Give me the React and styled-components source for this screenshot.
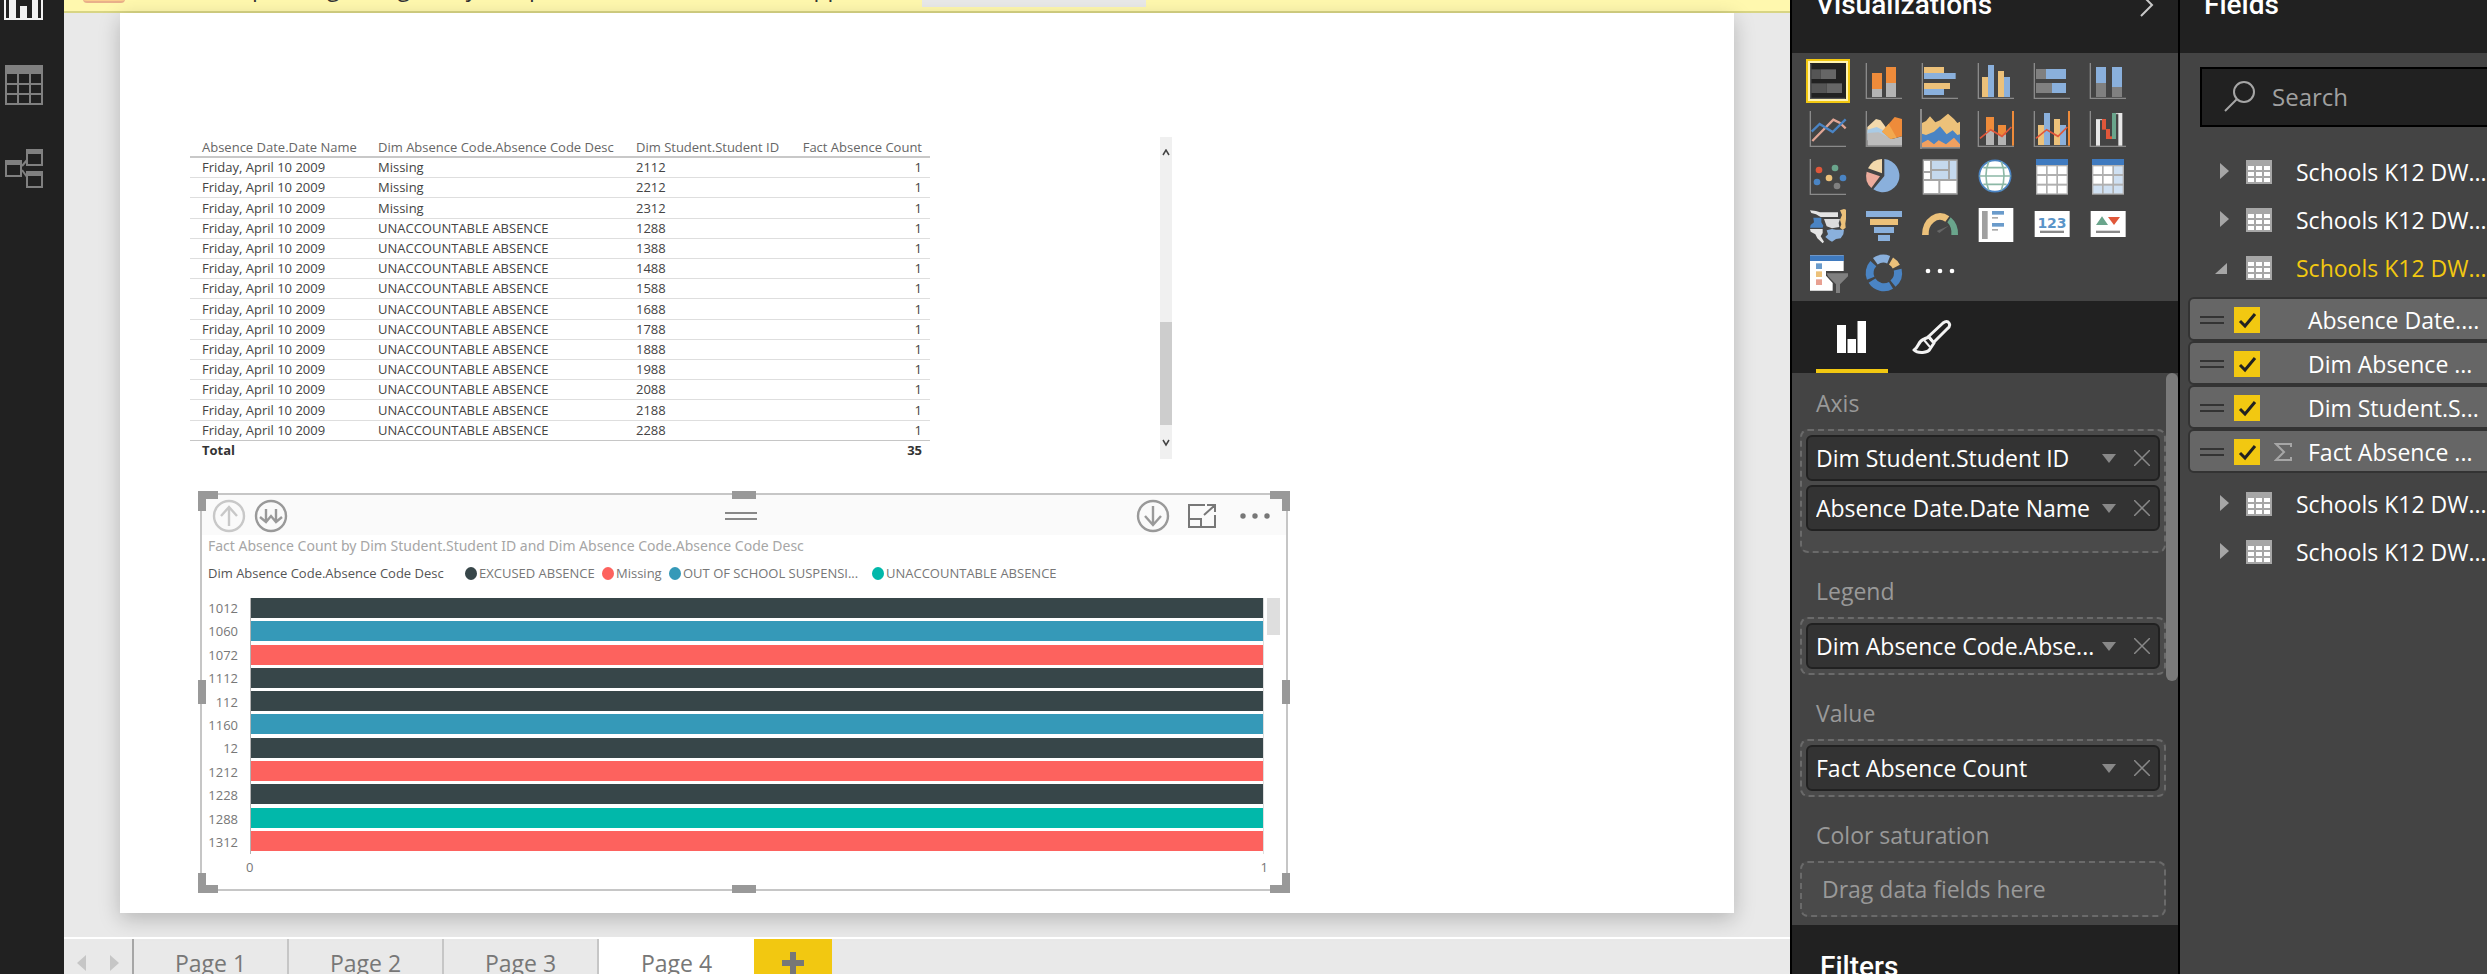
import React from "react";
import styled, { createGlobalStyle, css } from "styled-components";

const GlobalStyle = createGlobalStyle`
  * { box-sizing: border-box; }
  html, body { margin: 0; height: 100%; overflow: hidden; }
  body { font-family: "Open Sans", "Noto Sans", sans-serif; background: #e9e9e9; }
  button { font: inherit; color: inherit; background: none; border: 0; padding: 0; }
  h2, h3, p { margin: 0; font-weight: 400; }
  svg { display: block; }
`;

const colors = {
  ink: "#212121",
  panel: "#444444",
  gold: "#f2c811",
  slate: "#374649",
  red: "#fd625e",
  blue: "#3599b8",
  teal: "#01b8aa",
};

/* ---------- Shell ---------- */

const Shell = styled.div`
  display: flex;
  height: 100vh;
  overflow: hidden;
`;

const Rail = styled.nav`
  flex: 0 0 64px;
  background: ${colors.ink};
`;

const RailList = styled.div`
  display: flex;
  flex-direction: column;
  margin-top: -41px;
`;

const RailButton = styled.button`
  height: 84px;
  padding-left: 4px;
`;

const Workspace = styled.main`
  flex: 1;
  min-width: 0;
  display: flex;
  flex-direction: column;
  background: #e9e9e9;
`;

const Banner = styled.div`
  flex: 0 0 50px;
  margin-top: -37px;
  padding: 0 19px;
  display: flex;
  align-items: center;
  background: #fff8ae;
  border-bottom: 2px solid #d8d584;
  color: #333;
  font-size: 23px;
  line-height: 30px;
  white-space: nowrap;
`;

const BannerIcon = styled.span`
  width: 42px;
  height: 32px;
  margin-right: 18px;
  border-radius: 4px;
  background: #fbcd8c;
  border-bottom: 2px solid #e9b08a;
`;

const BannerButton = styled.button`
  width: 224px;
  height: 40px;
  margin-left: 36px;
  background: #e9e9e9;
`;

const Desk = styled.div`
  flex: 1;
  min-height: 0;
  padding: 0 56px 24px;
`;

const Paper = styled.section`
  height: 100%;
  padding: 124px 0 0 70px;
  background: #fff;
  box-shadow: 0 6px 20px rgba(0, 0, 0, 0.22);
`;

/* ---------- Table visual ---------- */

const TableVisual = styled.section`
  display: flex;
  justify-content: space-between;
  width: 982px;
  height: 322px;
`;

const DataTable = styled.table`
  width: 740px;
  align-self: flex-start;
  table-layout: fixed;
  border-collapse: collapse;
  font-size: 13px;
  line-height: 18px;
  color: #444;
  white-space: nowrap;

  th, td { padding: 0 0 0 12px; text-align: left; }
  th:last-child, td:last-child { padding: 0 8px 0 0; text-align: right; }
  thead th { font-weight: 500; color: #666; border-bottom: 2px solid #c8c8c8; }
  tbody td { border-bottom: 1px solid #dedede; }
  tbody tr:last-child td { border-bottom: 1px solid #c6c6c6; }
  tfoot td, tfoot th { font-weight: 700; color: #333; }
`;

const Col = styled.col`
  width: ${(p) => p.$w}px;
`;

const Row = styled.tr`
  height: 20px;
  &:nth-child(5n + 3) { height: 21px; }
`;

const VScroll = styled.div`
  display: flex;
  flex-direction: column;
  align-items: center;
  width: 12px;
  padding: 12px 0 12px;
  background: #f0f0f0;
`;

const VThumb = styled.div`
  width: 12px;
  height: 103px;
  margin: auto 0 14px;
  background: #cdcdcd;
`;

/* ---------- Chart visual ---------- */

const ChartVisual = styled.section`
  position: relative;
  width: 1088px;
  height: 398px;
  margin: 34px 0 0 10px;
  border: 2px solid #c6c6c6;
  background: #fff;
`;

const Handle = styled.span`
  position: absolute;
  ${(p) => p.$v === "mid" && css`top: 50%; margin-top: -12px;`}
  ${(p) => p.$v === "top" && css`top: -4px;`}
  ${(p) => p.$v === "bottom" && css`bottom: -4px;`}
  ${(p) => p.$h === "mid" && css`left: 50%; margin-left: -12px;`}
  ${(p) => p.$h === "left" && css`left: -4px;`}
  ${(p) => p.$h === "right" && css`right: -4px;`}
  width: ${(p) => (p.$v === "mid" ? 8 : p.$h === "mid" ? 24 : 20)}px;
  height: ${(p) => (p.$h === "mid" ? 8 : p.$v === "mid" ? 24 : 20)}px;
  ${(p) =>
    p.$v === "mid" || p.$h === "mid"
      ? css`background: #999;`
      : css`
          border: 0 solid #999;
          border-${p.$v}-width: 8px;
          border-${p.$h}-width: 8px;
        `}
`;

const ChartBar = styled.header`
  display: grid;
  grid-template-columns: 1fr auto 1fr;
  align-items: center;
  height: 40px;
  padding: 2px 16px 0 10px;
  background: #fafafa;
  color: #888;
`;

const ToolGroup = styled.div`
  display: flex;
  align-items: center;
  gap: ${(p) => p.$gap}px;
  justify-content: ${(p) => (p.$end ? "flex-end" : "flex-start")};
`;

const ToolButton = styled.button`
  color: ${(p) => (p.$dim ? "#c8c8c8" : "#999")};
`;

const ChartTitle = styled.h3`
  padding-left: 6px;
  font-family: "Noto Sans", sans-serif;
  font-size: 14px;
  line-height: 22px;
  color: #a6a6a6;
`;

const Legend = styled.div`
  display: flex;
  align-items: center;
  height: 32px;
  padding-left: 6px;
  font-size: 13px;
  line-height: 18px;
  color: #777;
`;

const LegendTitle = styled.span`
  width: 257px;
  font-weight: 500;
  color: #555;
`;

const LegendItem = styled.span`
  display: flex;
  align-items: center;
  gap: 2px;
  width: ${(p) => p.$w}px;
  white-space: nowrap;
`;

const Dot = styled.i`
  width: 12px;
  height: 13px;
  border-radius: 50%;
  background: ${(p) => p.$c};
`;

const Plot = styled.div`
  display: flex;
  margin-top: 9px;
  font-size: 13px;
  line-height: 20px;
  color: #777;
`;

const PlotLabels = styled.ol`
  list-style: none;
  margin: 0;
  padding: 0 12px 0 0;
  width: 48px;
  height: 254px;
  display: flex;
  flex-direction: column;
  justify-content: space-between;
  text-align: right;
`;

const PlotArea = styled.div`
  flex: 1;
`;

const Bars = styled.div`
  display: flex;
  flex-direction: column;
  justify-content: space-between;
  height: 256px;
  padding-bottom: 3px;
  border-left: 1px solid #b3b3b3;
  border-right: 1px solid #dedede;
`;

const Bar = styled.div`
  height: 20px;
  background: ${(p) => p.$c};
`;

const Ticks = styled.div`
  display: flex;
  justify-content: space-between;
  margin: 3px -4px 0;
`;

const PlotThumb = styled.div`
  width: 13px;
  height: 37px;
  margin: 0 6px 0 3px;
  background: #dedede;
`;

/* ---------- Page tabs ---------- */

const PageTabs = styled.nav`
  flex: 0 0 50px;
  margin-bottom: -13px;
  display: flex;
  border-top: 2px solid #fff;
  font-size: 23px;
  line-height: 30px;
  color: #777;
`;

const TabNav = styled.div`
  display: flex;
  align-items: center;
  justify-content: center;
  gap: 24px;
  width: 70px;
  border-right: 2px solid #a6a6a6;
`;

const PageTab = styled.button`
  width: 155px;
  border-right: ${(p) => (p.$active ? 0 : 2)}px solid #c6c6c6;
  background: ${(p) => (p.$active ? "#fff" : "transparent")};
  font-weight: 500;
`;

const AddTab = styled.button`
  display: grid;
  place-items: center;
  width: 78px;
  background: ${colors.gold};
`;

/* ---------- Side panels ---------- */

const Panel = styled.aside`
  flex: 0 0 ${(p) => p.$w}px;
  min-width: 0;
  overflow: hidden;
  display: flex;
  flex-direction: column;
  border-left: 2px solid #000;
  background: ${colors.panel};
  color: #fff;
  font-size: 23px;
  line-height: 36px;
  white-space: nowrap;
`;

const PanelHeader = styled.header`
  flex: none;
  display: flex;
  align-items: center;
  justify-content: space-between;
  height: 96px;
  margin-top: -43px;
  padding: 0 24px;
  background: ${colors.ink};
`;

const PanelTitle = styled.h2`
  font-family: Roboto, "Open Sans", sans-serif;
  font-size: 28px;
  font-weight: 500;
  line-height: 36px;
`;

const IconGrid = styled.div`
  display: grid;
  flex: none;
  grid-template-columns: repeat(6, 44px);
  gap: 4px 12px;
  padding: 6px 14px;
`;

const VizButton = styled.button`
  width: 44px;
  height: 44px;
  ${(p) =>
    p.$active &&
    css`
      background: ${colors.ink};
      box-shadow: inset 0 0 0 2px ${colors.gold}, inset 0 0 0 4px #fff3b0;
    `}
`;

const PaneTabs = styled.div`
  display: flex;
  flex: none;
  gap: 8px;
  height: 72px;
  padding-left: 24px;
  background: ${colors.ink};
`;

const PaneTab = styled.button`
  display: grid;
  place-items: center;
  width: 72px;
  padding-top: 4px;
  border-bottom: 4px solid ${(p) => (p.$active ? colors.gold : "transparent")};
`;

const WellArea = styled.div`
  display: flex;
  flex: none;
  justify-content: space-between;
`;

const Wells = styled.div`
  flex: 1;
  min-width: 0;
  display: flex;
  flex-direction: column;
  gap: 20px;
  padding: 12px 0 8px 8px;
`;

const WellLabel = styled.h3`
  padding-left: 16px;
  margin-bottom: 8px;
  font-size: 23px;
  color: #999;
`;

const Well = styled.div`
  display: flex;
  flex-direction: column;
  gap: 4px;
  padding: 4px 4px ${(p) => (p.$open ? 20 : 4)}px;
  border: 2px dashed #6a6a6a;
  border-radius: 8px;
  background: #4a4a4a;
`;

const Pill = styled.div`
  display: flex;
  align-items: center;
  height: 46px;
  padding: 0 8px;
  border: 2px solid ${colors.ink};
  border-radius: 6px;
  background: #333;
`;

const PillName = styled.span`
  flex: 1;
  overflow: hidden;
`;

const PillButton = styled.button`
  margin-left: ${(p) => p.$gap || 0}px;
  color: #888;
`;

const Placeholder = styled.p`
  height: 44px;
  padding-left: 16px;
  line-height: 44px;
  color: #999;
`;

const WellThumb = styled.div`
  width: 12px;
  height: 308px;
  border-radius: 6px;
  background: #7a7a7a;
`;

const FiltersHeader = styled.header`
  flex: 1 0 72px;
  padding: 24px 0 0 28px;
  background: ${colors.ink};
`;

const SearchBox = styled.label`
  display: flex;
  align-items: center;
  flex: none;
  width: 340px;
  height: 60px;
  margin: 14px 0 21px 20px;
  padding-left: 22px;
  border: 2px solid #000;
  background: ${colors.ink};
`;

const SearchInput = styled.input`
  width: 240px;
  margin-left: 16px;
  padding: 0;
  border: 0;
  outline: 0;
  background: transparent;
  font: inherit;
  font-size: 24px;
  color: #fff;
  &::placeholder { color: #a0a0a0; opacity: 1; }
`;

const TableNode = styled.button`
  display: grid;
  flex: none;
  grid-template-columns: 14px 26px auto;
  align-items: center;
  justify-content: start;
  height: 48px;
  padding-left: 35px;
  color: ${(p) => (p.$active ? colors.gold : "#fff")};

  svg:nth-child(2) { margin-left: 17px; }
  span { margin-left: 41px; }
`;

const FieldList = styled.div`
  display: flex;
  flex: none;
  flex-direction: column;
  margin: 5px 0 7px 8px;
`;

const FieldRow = styled.label`
  display: flex;
  align-items: center;
  width: 360px;
  height: 44px;
  padding: 2px 0 0 10px;
  border: 2px solid #333;
  border-radius: 6px;
  background: #666;
`;

const Grip = styled.span`
  width: ${(p) => p.$w}px;
  height: 8px;
  border: solid ${(p) => p.$c};
  border-width: 2px 0;
`;

const CheckWrap = styled.span`
  display: grid;
  width: 26px;
  height: 26px;
  margin-left: 10px;
  > * { grid-area: 1 / 1; }
  svg { pointer-events: none; }
`;

const CheckInput = styled.input`
  appearance: none;
  width: 26px;
  height: 26px;
  margin: 0;
  background: ${colors.gold};
`;

const SigmaSlot = styled.span`
  width: 48px;
  padding-left: 14px;
`;

/* ---------- Icons ---------- */

const Y = "#ecc17a";
const B = "#8ab0dc";
const DB = "#4a84c4";
const O = "#ee8b3a";
const G = "#b4b4b4";
const DG = "#808080";
const GR = "#6aa58c";
const R = "#e0573a";

const R4 = ({ r, f }) => <rect x={r[0]} y={r[1]} width={r[2]} height={r[3]} fill={f} />;
const Axes = () => <path d="M13 12V118H120" fill="none" stroke="#8a8a8a" strokeWidth="4" />;

const GridGlyph = ({ last }) => (
  <>
    <R4 r={[18, 12, 96, 107]} f="#b0b0b0" />
    <R4 r={[18, 12, 96, 18]} f="#3f7abf" />
    {[0, 1, 2].map((i) =>
      [0, 1, 2].map((j) => (
        <R4 key={`${i}${j}`} r={[22 + i * 31, 34 + j * 29, 26, 23]} f={last && (i === 2 || j === 2) ? "#cfe0f2" : "#fff"} />
      ))
    )}
  </>
);

const vizIcons = [
  ["Stacked bar chart", <><path d="M14 14V118H118" fill="none" stroke="#555" strokeWidth="4" /><R4 r={[16, 31, 28, 29]} f="#555" /><R4 r={[44, 31, 46, 29]} f="#666" /><R4 r={[16, 73, 46, 29]} f="#555" /><R4 r={[62, 73, 46, 29]} f="#666" /></>],
  ["Stacked column chart", <><Axes /><R4 r={[30, 42, 30, 48]} f={O} /><R4 r={[30, 90, 30, 24]} f={G} /><R4 r={[72, 24, 30, 48]} f={O} /><R4 r={[72, 72, 30, 42]} f={G} /></>],
  ["Clustered bar chart", <><Axes /><R4 r={[18, 24, 60, 18]} f={Y} /><R4 r={[18, 42, 95, 18]} f={B} /><R4 r={[18, 72, 78, 18]} f={Y} /><R4 r={[18, 90, 60, 18]} f={B} /></>],
  ["Clustered column chart", <><Axes /><R4 r={[24, 54, 18, 60]} f={Y} /><R4 r={[42, 18, 18, 96]} f={B} /><R4 r={[72, 36, 18, 78]} f={Y} /><R4 r={[90, 54, 18, 60]} f={B} /></>],
  ["100% stacked bar chart", <><Axes /><R4 r={[18, 30, 30, 30]} f={DG} /><R4 r={[48, 30, 60, 30]} f={B} /><R4 r={[18, 72, 48, 30]} f={DG} /><R4 r={[66, 72, 42, 30]} f={B} /></>],
  ["100% stacked column chart", <><Axes /><R4 r={[30, 24, 30, 48]} f={B} /><R4 r={[30, 72, 30, 42]} f={DG} /><R4 r={[78, 24, 30, 60]} f={B} /><R4 r={[78, 84, 30, 30]} f={DG} /></>],

  ["Line chart", <><Axes /><path d="M19 102L82 38 102 48 119 64" fill="none" stroke="#e0a595" strokeWidth="7" /><path d="M17 74L41 51 80 75 119 37" fill="none" stroke={DB} strokeWidth="7" /></>],
  ["Area chart", <><path d="M16 60L42 36 56 40 78 70 60 84 16 80Z" fill="#f3d9ac" /><path d="M16 68L44 60 80 78 80 100H16Z" fill="#a9cbe6" /><path d="M16 78L50 76 90 96 120 88V116H16Z" fill="#bcbcbc" /><path d="M60 74L98 30 120 36V88L86 96Z" fill={O} /><path d="M60 74L80 50 104 92 86 96Z" fill="#f2a950" /><Axes /></>],
  ["Ribbon chart", <><R4 r={[6, 6, 6, 120]} f="#8a8a8a" /><path d="M12 48L24 42 36 28 52 46 66 40 90 20 108 36 118 48 126 44V120H12Z" fill={Y} /><path d="M12 80L24 84 48 74 66 58 86 82 104 70 118 84 126 82V120H12Z" fill={DB} /><path d="M12 120V108L30 98 48 112 62 100 84 112 108 92 126 112V120Z" fill="#f0a060" /><R4 r={[6, 120, 120, 5]} f="#8a8a8a" /></>],
  ["Line and stacked column chart", <><Axes /><R4 r={[36, 30, 24, 42]} f={O} /><R4 r={[36, 72, 24, 42]} f={G} /><R4 r={[72, 54, 24, 30]} f={O} /><R4 r={[72, 84, 24, 30]} f={G} /><path d="M18 94L50 68 84 88 112 60" fill="none" stroke={R} strokeWidth="5" /><R4 r={[114, 12, 6, 104]} f={O} /></>],
  ["Line and clustered column chart", <><Axes /><R4 r={[24, 54, 18, 60]} f={Y} /><R4 r={[42, 18, 18, 96]} f={B} /><R4 r={[72, 36, 18, 78]} f={Y} /><R4 r={[90, 54, 18, 60]} f={B} /><path d="M18 94L50 68 84 88 112 60" fill="none" stroke={R} strokeWidth="5" /><R4 r={[114, 12, 6, 104]} f={O} /></>],
  ["Waterfall chart", <><Axes /><path d="M30 38H54M90 20H108" stroke="#ddd" strokeWidth="3" /><R4 r={[30, 38, 12, 78]} f="#e8e8e8" /><R4 r={[48, 36, 12, 32]} f={R} /><R4 r={[60, 66, 12, 30]} f={R} /><R4 r={[66, 88, 16, 8]} f={R} /><R4 r={[78, 18, 12, 78]} f={GR} /><R4 r={[97, 18, 12, 98]} f="#e8e8e8" /></>],

  ["Scatter chart", <><Axes /><circle cx="39" cy="45" r="10" fill={R} /><circle cx="87" cy="39" r="10" fill={GR} /><circle cx="69" cy="69" r="10" fill={Y} /><circle cx="111" cy="69" r="10" fill={DB} /><circle cx="33" cy="81" r="10" fill={DB} /><circle cx="93" cy="93" r="10" fill={DG} /></>],
  ["Pie chart", <><path d="M67 12A50 50 0 1 1 34 103L67 63Z" fill={B} /><path d="M60 12V55L18 40A48 48 0 0 1 60 12Z" fill="#f3d9ac" /><path d="M14 50L54 64 28 99A50 50 0 0 1 14 50Z" fill="#ecab9c" /></>],
  ["Treemap", <><R4 r={[14, 13, 105, 106]} f="#a6a6a6" /><R4 r={[18, 18, 18, 30]} f="#fff" /><R4 r={[18, 54, 18, 18]} f="#fff" /><R4 r={[42, 18, 48, 24]} f="#c5d9ee" /><R4 r={[42, 48, 48, 24]} f="#c5d9ee" /><R4 r={[96, 18, 19, 54]} f="#c5d9ee" /><R4 r={[18, 78, 43, 36]} f="#fff" /><R4 r={[67, 78, 48, 36]} f="#fff" /></>],
  ["Map", <><circle cx="63" cy="63" r="47" fill="#fff" stroke={DB} strokeWidth="5" /><path d="M16 63H110M28 38H98M28 88H98M44 20C32 50 34 78 44 106M82 20C94 50 92 78 82 106" fill="none" stroke="#8cb8a6" strokeWidth="5" /></>],
  ["Table", <GridGlyph />],
  ["Matrix", <GridGlyph last />],

  ["Filled map", <><path d="M12 22L30 24 42 28H96V42H44L30 34 16 30Z" fill="#e4e4e4" /><path d="M102 22L114 18 120 20V48L118 62 119 74 110 81 102 74 106 64 102 50 108 36Z" fill={Y} /><path d="M22 44H46V58L52 68 50 74H12L14 66 24 58Z" fill={DB} /><path d="M54 48H102L98 60 100 72 78 76 62 70Z" fill="#dcdcdc" /><path d="M12 78H50V90L44 100 54 116 50 121 34 106 28 94 14 86Z" fill="#e4e4e4" /><path d="M62 82L78 78 90 80 114 80 112 94 104 106 90 108 78 116 70 112 58 102 66 94Z" fill={B} /></>],
  ["Funnel", <><R4 r={[12, 24, 108, 18]} f={B} /><R4 r={[24, 48, 84, 18]} f={Y} /><R4 r={[36, 72, 60, 18]} f={B} /><R4 r={[48, 96, 36, 18]} f={B} /></>],
  ["Gauge", <><path d="M12 96A54 66 0 0 1 94 40L82 56A34 42 0 0 0 32 96Z" fill={Y} /><path d="M98 43A54 62 0 0 1 120 96H100A34 42 0 0 0 88 58Z" fill={GR} /><path d="M56 84L92 68 64 90Z" fill="#666" /></>],
  ["Multi-row card", <><R4 r={[14, 15, 104, 102]} f="#fff" /><R4 r={[24, 24, 17, 84]} f="#a0a0a0" /><R4 r={[54, 24, 36, 11]} f="#6a9bcb" /><R4 r={[54, 42, 18, 5]} f="#aaa" /><R4 r={[54, 60, 36, 11]} f="#6a9bcb" /><R4 r={[54, 78, 18, 5]} f="#aaa" /></>],
  ["Card", <><R4 r={[14, 24, 105, 78]} f="#fff" /><text x="66" y="74" textAnchor="middle" fontFamily="DejaVu Sans, sans-serif" fontWeight="700" fontSize="42" fill="#5a94c8">123</text><R4 r={[30, 83, 72, 7]} f="#888" /></>],
  ["KPI", <><R4 r={[14, 24, 105, 78]} f="#fff" /><path d="M30 66L48 40 66 66Z" fill={GR} /><path d="M66 42H102L84 66Z" fill={R} /><R4 r={[30, 83, 72, 7]} f="#888" /></>],

  ["Slicer", <><path d="M12 13H113V60H60V74L80 96V119H12Z" fill="#fff" /><R4 r={[12, 13, 102, 17]} f="#3f7abf" /><R4 r={[30, 37, 18, 17]} f="#6a9bcb" /><R4 r={[30, 61, 18, 17]} f={Y} /><R4 r={[30, 85, 18, 17]} f="#e8a091" /><path d="M62 67H126V76L102 100V126H90V100L66 76Z" fill={DG} /></>],
  ["Donut chart", <><g fill="none" strokeWidth="24"><path d="M40 31A42 42 0 0 1 80 26" stroke={B} /><path d="M87 30A42 42 0 0 1 103 47" stroke={Y} /><path d="M107 56A42 42 0 0 1 93 98" stroke={DB} /><path d="M87 103A42 42 0 0 1 30 89" stroke={DB} /><path d="M26 82A42 42 0 0 1 34 38" stroke={DB} /></g></>],
  ["More visuals", <g fill="#fff"><circle cx="30" cy="60" r="7" /><circle cx="66" cy="60" r="7" /><circle cx="102" cy="60" r="7" /></g>],
];

const ReportIcon = () => (
  <svg width="40" height="40" viewBox="0 0 40 40">
    <path d="M1 0V38H38V0" fill="none" stroke="#f2f2f2" strokeWidth="2" />
    <path d="M5 8H12V38H5ZM16 25H23V38H16ZM28 0H34V38H28Z" fill="#f2f2f2" />
  </svg>
);

const DataIcon = () => (
  <svg width="40" height="40" viewBox="0 0 40 40" fill="none" stroke="#808080">
    <path d="M1 0V9H39V0Z" fill="#808080" stroke="none" />
    <path d="M2 1H38V39H2ZM2 19H38M2 29H38M14 9V39M26 9V39" strokeWidth="2" />
  </svg>
);

const ModelIcon = () => (
  <svg width="40" height="40" viewBox="0 0 40 40" fill="none" stroke="#808080" strokeWidth="2">
    <path d="M2 12H17V27H2ZM23 1H38V16H23ZM23 23H38V38H23Z" />
    <path d="M2 14H17M23 3H38M23 25H38" strokeWidth="4" />
    <path d="M18 17L23 11M18 21L23 28" />
  </svg>
);

const CircleIcon = ({ d }) => (
  <svg width="34" height="34" viewBox="0 0 34 34" fill="none" stroke="currentColor" strokeWidth="2.400">
    <circle cx="17" cy="17" r="15" />
    <path d={d} />
  </svg>
);

const FocusIcon = () => (
  <svg width="30" height="26" viewBox="0 0 30 26" fill="none" stroke="#777" strokeWidth="2">
    <path d="M18 2H2V24H28V12M2 16H14V24M17 12L27 3M20 2H28V9" />
  </svg>
);

const TableIcon = () => (
  <svg width="26" height="24" viewBox="0 0 26 24">
    <rect width="26" height="24" fill="#a6a6a6" />
    {[6, 12, 18].map((y) => [2, 10, 18].map((x) => <rect key={`${x}${y}`} x={x} y={y} width="6" height="4" fill="#fff" />))}
  </svg>
);

const BrushIcon = () => (
  <svg width="40" height="36" viewBox="0 0 40 36" fill="none" stroke="#f2f2f2" strokeWidth="3" strokeLinejoin="round">
    <path d="M16 18L31 4Q35 1 37 4T35 10L22 23" />
    <path d="M12 20C6 22 7 28 2 31C6 35 16 34 18 30L22 24L17 18Z" />
    <path d="M16 18L22 24M12 21L18 28" strokeWidth="2" />
  </svg>
);

/* ---------- Data ---------- */

const rows = [
  ["Missing", "2112"], ["Missing", "2212"], ["Missing", "2312"],
  ...["1288", "1388", "1488", "1588", "1688", "1788", "1888", "1988", "2088", "2188", "2288"].map((id) => ["UNACCOUNTABLE ABSENCE", id]),
];

const bars = [
  ["1012", colors.slate], ["1060", colors.blue], ["1072", colors.red], ["1112", colors.slate],
  ["112", colors.slate], ["1160", colors.blue], ["12", colors.slate], ["1212", colors.red],
  ["1228", colors.slate], ["1288", colors.teal], ["1312", colors.red],
];

const legend = [
  ["EXCUSED ABSENCE", colors.slate, 137],
  ["Missing", colors.red, 67],
  ["OUT OF SCHOOL SUSPENSI...", colors.blue, 203],
  ["UNACCOUNTABLE ABSENCE", colors.teal, 200],
];

const wells = [
  ["Axis", ["Dim Student.Student ID", "Absence Date.Date Name"]],
  ["Legend", ["Dim Absence Code.Abse..."]],
  ["Value", ["Fact Absence Count"]],
  ["Color saturation", []],
];

const fields = ["Absence Date....", "Dim Absence ...", "Dim Student.S...", "Fact Absence ..."];

/* ---------- Parts ---------- */

const SchoolTable = ({ open }) => (
  <TableNode $active={open} aria-expanded={!!open}>
    <svg width="14" height="18" viewBox="0 0 14 18" fill="#a6a6a6">
      <path d={open ? "M12 4V15H0Z" : "M5 0L14 8 5 16Z"} />
    </svg>
    <TableIcon />
    <span>Schools K12 DW...</span>
  </TableNode>
);

const FieldWell = ({ label, items }) => (
  <section>
    <WellLabel>{label}</WellLabel>
    <Well $open={items.length > 1}>
      {items.map((name) => (
        <Pill key={name}>
          <PillName>{name}</PillName>
          <PillButton aria-label={`Options for ${name}`}>
            <svg width="14" height="9" viewBox="0 0 14 9"><path d="M0 0H14L7 9Z" fill="currentColor" /></svg>
          </PillButton>
          <PillButton $gap={18} aria-label={`Remove ${name}`}>
            <svg width="16" height="16" viewBox="0 0 16 16"><path d="M0 0L16 16M16 0L0 16" stroke="currentColor" strokeWidth="1.5" /></svg>
          </PillButton>
        </Pill>
      ))}
      {items.length === 0 && <Placeholder>Drag data fields here</Placeholder>}
    </Well>
  </section>
);

const AbsenceTable = () => (
  <TableVisual>
    <DataTable>
      <colgroup><Col $w={176} /><Col $w={258} /><Col $w={166} /><Col $w={140} /></colgroup>
      <thead>
        <Row>
          <th>Absence Date.Date Name</th><th>Dim Absence Code.Absence Code Desc</th>
          <th>Dim Student.Student ID</th><th>Fact Absence Count</th>
        </Row>
      </thead>
      <tbody>
        {rows.map(([desc, id]) => (
          <Row key={id}><td>Friday, April 10 2009</td><td>{desc}</td><td>{id}</td><td>1</td></Row>
        ))}
      </tbody>
      <tfoot><Row><th>Total</th><td /><td /><td>35</td></Row></tfoot>
    </DataTable>
    <VScroll>
      <svg width="8" height="8" viewBox="0 0 8 8"><path d="M1 6L4 1 7 6" fill="none" stroke="#444" strokeWidth="1.5" /></svg>
      <VThumb />
      <svg width="8" height="8" viewBox="0 0 8 8"><path d="M1 1L4 6 7 1" fill="none" stroke="#444" strokeWidth="1.5" /></svg>
    </VScroll>
  </TableVisual>
);

const AbsenceChart = () => (
  <ChartVisual>
    <ChartBar>
      <ToolGroup $gap={8}>
        <ToolButton $dim aria-label="Drill up"><CircleIcon d="M17 27V8M9 17L17 8 25 17" /></ToolButton>
        <ToolButton aria-label="Go to next level"><CircleIcon d="M12 10V22M22 10V22M6 18L12 23 17 17 22 23 28 18" /></ToolButton>
      </ToolGroup>
      <Grip $w={32} $c="#888" />
      <ToolGroup $gap={17} $end>
        <ToolButton aria-label="Drill mode"><CircleIcon d="M17 7V26M9 17L17 26 25 17" /></ToolButton>
        <ToolButton aria-label="Focus mode"><FocusIcon /></ToolButton>
        <ToolButton aria-label="More options">
          <svg width="36" height="8" viewBox="0 0 36 8" fill="#777"><circle cx="9" cy="4" r="2.700" /><circle cx="21" cy="4" r="2.700" /><circle cx="33" cy="4" r="2.700" /></svg>
        </ToolButton>
      </ToolGroup>
    </ChartBar>
    <ChartTitle>Fact Absence Count by Dim Student.Student ID and Dim Absence Code.Absence Code Desc</ChartTitle>
    <Legend>
      <LegendTitle>Dim Absence Code.Absence Code Desc</LegendTitle>
      {legend.map(([name, c, w]) => (
        <LegendItem key={name} $w={w}><Dot $c={c} />{name}</LegendItem>
      ))}
    </Legend>
    <Plot>
      <PlotLabels>{bars.map(([id]) => <li key={id}>{id}</li>)}</PlotLabels>
      <PlotArea>
        <Bars>{bars.map(([id, c]) => <Bar key={id} $c={c} />)}</Bars>
        <Ticks><span>0</span><span>1</span></Ticks>
      </PlotArea>
      <PlotThumb />
    </Plot>
    {["top", "mid", "bottom"].map((v) =>
      ["left", "mid", "right"].map((h) => (v === "mid" && h === "mid" ? null : <Handle key={v + h} $v={v} $h={h} />))
    )}
  </ChartVisual>
);

export default function App() {
  return (
    <Shell>
      <GlobalStyle />
      <Rail>
        <RailList>
          <RailButton aria-label="Report"><ReportIcon /></RailButton>
          <RailButton aria-label="Data"><DataIcon /></RailButton>
          <RailButton aria-label="Relationships"><ModelIcon /></RailButton>
        </RailList>
      </Rail>

      <Workspace>
        <Banner>
          <BannerIcon />
          There are pending changes in your queries that haven't been applied.
          <BannerButton aria-label="Apply changes" />
        </Banner>
        <Desk>
          <Paper>
            <AbsenceTable />
            <AbsenceChart />
          </Paper>
        </Desk>
        <PageTabs>
          <TabNav>
            <svg width="9" height="16" viewBox="0 0 9 16"><path d="M9 0V16L0 8Z" fill="#c6c6c6" /></svg>
            <svg width="9" height="16" viewBox="0 0 9 16"><path d="M0 0V16L9 8Z" fill="#c6c6c6" /></svg>
          </TabNav>
          {[1, 2, 3, 4].map((n) => <PageTab key={n} $active={n === 4}>Page {n}</PageTab>)}
          <AddTab aria-label="New page">
            <svg width="22" height="22" viewBox="0 0 22 22"><path d="M11 0V22M0 11H22" stroke="#777" strokeWidth="6" /></svg>
          </AddTab>
        </PageTabs>
      </Workspace>

      <Panel $w={388}>
        <PanelHeader>
          <PanelTitle>Visualizations</PanelTitle>
          <svg width="14" height="24" viewBox="0 0 14 24"><path d="M1 1L12 12 1 23" fill="none" stroke="#c8c8c8" strokeWidth="2" /></svg>
        </PanelHeader>
        <IconGrid>
          {vizIcons.map(([name, glyph], i) => (
            <VizButton key={name} $active={i === 0} aria-label={name}>
              <svg width="44" height="44" viewBox="0 0 132 132">{glyph}</svg>
            </VizButton>
          ))}
        </IconGrid>
        <PaneTabs>
          <PaneTab $active aria-label="Fields">
            <svg width="30" height="32" viewBox="0 0 30 32" fill="#fff"><path d="M0 4H9V32H0ZM10.500 18H19V32H10.500ZM20.500 0H29V32H20.500Z" /></svg>
          </PaneTab>
          <PaneTab aria-label="Format"><BrushIcon /></PaneTab>
        </PaneTabs>
        <WellArea>
          <Wells>{wells.map(([label, items]) => <FieldWell key={label} label={label} items={items} />)}</Wells>
          <WellThumb />
        </WellArea>
        <FiltersHeader><PanelTitle>Filters</PanelTitle></FiltersHeader>
      </Panel>

      <Panel $w={309}>
        <PanelHeader><PanelTitle>Fields</PanelTitle></PanelHeader>
        <SearchBox>
          <svg width="32" height="32" viewBox="0 0 32 32" fill="none" stroke="#a6a6a6" strokeWidth="2"><circle cx="20" cy="11" r="10" /><path d="M13 18L1 30" /></svg>
          <SearchInput type="text" placeholder="Search" aria-label="Search" />
        </SearchBox>
        <SchoolTable />
        <SchoolTable />
        <SchoolTable open />
        <FieldList>
          {fields.map((name, i) => (
            <FieldRow key={name}>
              <Grip $w={24} $c="#333" />
              <CheckWrap>
                <CheckInput type="checkbox" defaultChecked />
                <svg width="26" height="26" viewBox="0 0 26 26"><path d="M6 14L11 19 21 7" fill="none" stroke="#212121" strokeWidth="3" /></svg>
              </CheckWrap>
              <SigmaSlot>
                {i === 3 && <svg width="18" height="18" viewBox="0 0 18 18"><path d="M17 4V1H2L10 9 2 17H17V14" fill="none" stroke="#a6a6a6" strokeWidth="2" /></svg>}
              </SigmaSlot>
              {name}
            </FieldRow>
          ))}
        </FieldList>
        <SchoolTable />
        <SchoolTable />
      </Panel>
    </Shell>
  );
}
